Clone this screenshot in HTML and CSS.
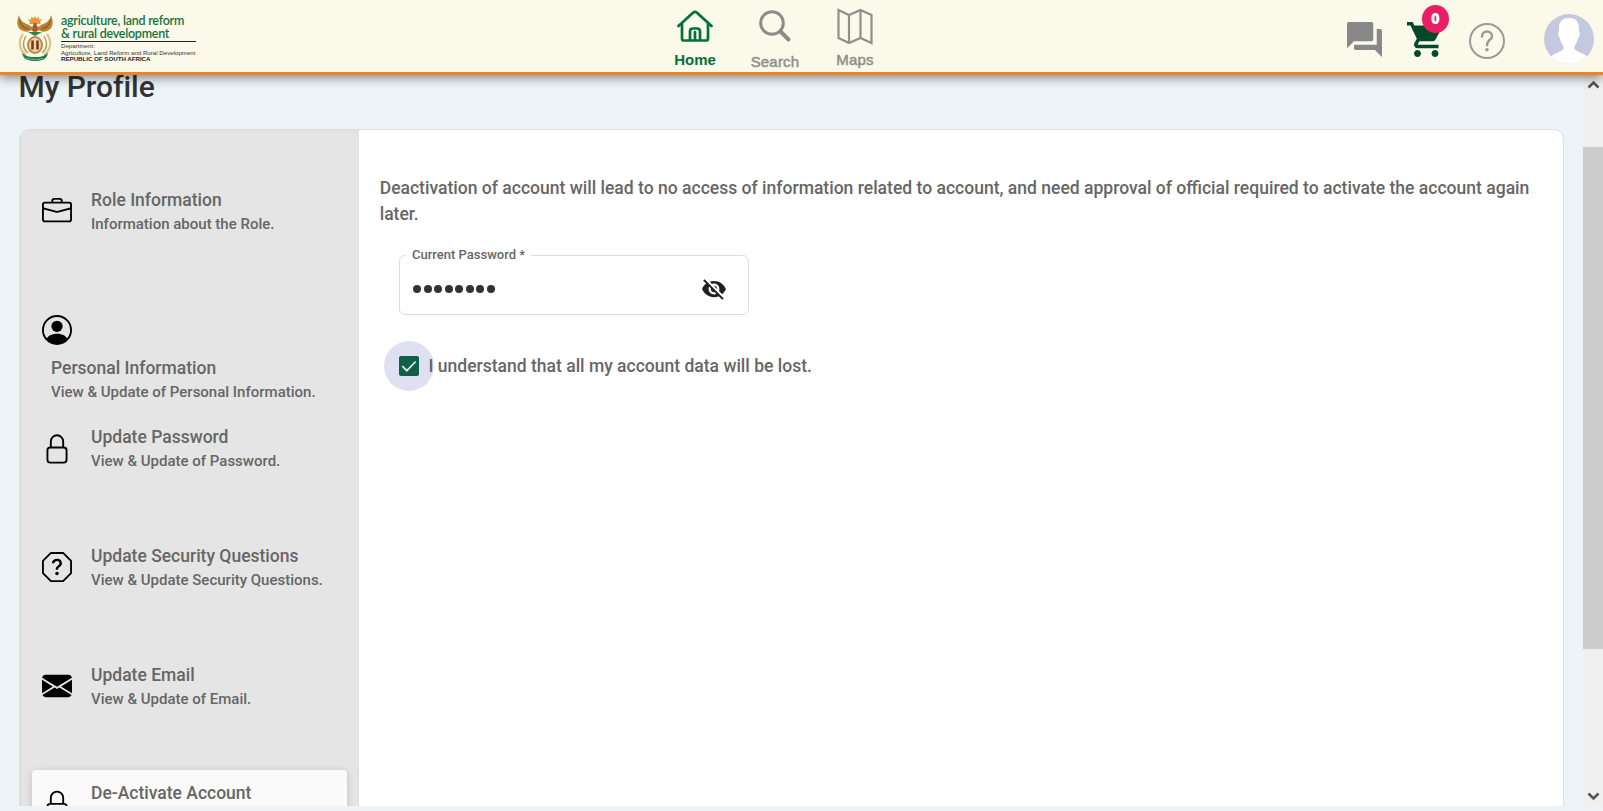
FILE: index.html
```html
<!DOCTYPE html>
<html lang="en">
<head>
<meta charset="utf-8">
<title>My Profile</title>
<link rel="stylesheet" href="styles.css">
</head>
<body>
<header class="topbar">
  <div class="brand">
    <svg class="emblem" viewBox="0 0 36 48">
      <path d="M18 1l1.200 2.600 2.500-2 .2 3 3.200-.4-2 2.800.5 2H12.400l.5-2-2-2.800 3.200.4.2-3 2.500 2z" fill="#f0953a"/>
      <path d="M2 0C-1 7 0 14 6 16c3 1 6 1 8-1l4 3 4-3c2 2 5 2 8 1 6-2 7-9 4-16-1 5-4 8-9 9.500l-4 2.500-3-4-3 4-4-2.500C6 8 3 5 2 0z" fill="#b9822e"/>
      <path d="M2.500 5c1 5 4 8 9 9M33.500 5c-1 5-4 8-9 9" fill="none" stroke="#8f6122" stroke-width="1.300"/>
      <path d="M16.500 8h3l1 8h-5z" fill="#a8572c"/>
      <path d="M11 17h14l-7 4z" fill="#2d8050"/>
      <path d="M6 19c-5 7-4 16 3 21M30 19c5 7 4 16-3 21" fill="none" stroke="#ddc48a" stroke-width="2.200"/>
      <path d="M9 21c-4 7-3 13 2 17M27 21c4 7 3 13-2 17" fill="none" stroke="#b59a60" stroke-width="1.300"/>
      <ellipse cx="18" cy="30" rx="8" ry="9" fill="#b98a45"/>
      <ellipse cx="18" cy="30" rx="6" ry="7" fill="#f0d6a6"/>
      <path d="M15.500 25.500v9M20.500 25.500v9" stroke="#7a2e20" stroke-width="2.500"/>
      <path d="M5 38c5 4 8 4 13 4s8 0 13-4c-1 6-6 8-13 8S6 44 5 38z" fill="#1f7a48"/>
      <path d="M10 43c5 2 11 2 16 0" fill="none" stroke="#c8dcb8" stroke-width=".8" stroke-dasharray="1.500 .8"/>
    </svg>
    <div class="brand-text">
      <div class="brand-name">agriculture, land reform</div>
      <div class="brand-name second">&amp; rural development</div>
      <div class="brand-dept">
        <div>Department:</div>
        <div>Agriculture, Land Reform and Rural Development</div>
        <div class="republic">REPUBLIC OF SOUTH AFRICA</div>
      </div>
    </div>
  </div>
  <nav class="nav">
    <a class="nav-item active">
      <svg width="40" height="36" viewBox="0 0 40 36" fill="none" stroke="#04703a" stroke-width="2.700" stroke-linecap="round" stroke-linejoin="round"><path d="M3.500 18L18 4.700q2-1.700 4 0L36.500 18M7 15.500v15q0 2 2 2h22q2 0 2-2v-15M15 32v-8.500q0-3 3-3h4q3 0 3 3V32M20 24v8"/></svg>
      <span>Home</span>
    </a>
    <a class="nav-item search">
      <svg width="40" height="38" viewBox="0 0 40 38" fill="none" stroke="#8c8c88" stroke-linecap="round"><circle cx="17" cy="15" r="11.300" stroke-width="3"/><path d="M25.500 23.500L33.500 31.500" stroke-width="4"/></svg>
      <span>Search</span>
    </a>
    <a class="nav-item maps">
      <svg width="40" height="38" viewBox="0 0 40 38" fill="none" stroke="#8f8f8b" stroke-width="2.200"><path d="M3.500 2L14 7l11.500-5L36.500 7v28L25.500 30 14 35 3.500 30zM14 7v28M25.500 2v28"/></svg>
      <span>Maps</span>
    </a>
  </nav>
  <div class="actions">
    <svg class="chat" viewBox="2 2 20 20" fill="#888"><path d="M21 6h-2v9H6v2c0 .55.45 1 1 1h11l4 4V7c0-.55-.45-1-1-1zm-4 6V3c0-.55-.45-1-1-1H3c-.55 0-1 .45-1 1v14l4-4h10c.55 0 1-.45 1-1z"/></svg>
    <div class="cart">
      <svg viewBox="1 2 20 20" fill="#06492a"><path d="M7 18c-1.100 0-1.990.9-1.990 2S5.900 22 7 22s2-.9 2-2-.9-2-2-2zM1 2v2h2l3.600 7.590-1.350 2.450c-.16.28-.25.61-.25.960 0 1.100.9 2 2 2h12v-2H7.420c-.14 0-.25-.11-.25-.25l.03-.12.9-1.630h7.450c.75 0 1.410-.41 1.750-1.030l3.580-6.490c.08-.14.12-.31.12-.480 0-.55-.45-1-1-1H5.210l-.94-2H1zm16 16c-1.100 0-1.990.9-1.990 2s.89 2 1.990 2 2-.9 2-2-.9-2-2-2z"/></svg>
      <span class="badge">0</span>
    </div>
    <svg class="help" viewBox="0 0 36 36" fill="none" stroke="#9b9b99"><circle cx="18" cy="18" r="17" stroke-width="2"/><path d="M13 13.500c0-3 2-5 5-5s5 2 5 4.700c0 3.800-5 3.600-5 9" stroke-width="2.500" stroke-linecap="round"/><circle cx="18" cy="26.700" r="1.800" fill="#9b9b99" stroke="none"/></svg>
    <svg class="avatar" viewBox="0 0 50 50"><defs><clipPath id="round"><circle cx="25" cy="25" r="25"/></clipPath></defs><g clip-path="url(#round)"><path d="M0 0h50v50H0z" fill="#c5c9df"/><path d="M25 4c-7 0-10 4-10 10v4c-1.500 0-1 5 1 6 .5 4 2 6 3.500 8v3c-2 3-10 4-13 8L4 52h42l-2.500-9c-3-4-11-5-13-8v-3c1.500-2 3-4 3.500-8 2-1 2.500-6 1-6v-4c0-6-3-10-10-10z" fill="#fff"/></g></svg>
  </div>
</header>
<div class="viewport">
  <main class="page">
    <h1>My Profile</h1>
    <section class="card">
      <aside class="sidebar">
        <a class="item">
          <svg viewBox="0 0 16 16"><path d="M6.500 1A1.500 1.500 0 0 0 5 2.500V3H1.500A1.500 1.500 0 0 0 0 4.500v8A1.500 1.500 0 0 0 1.500 14h13a1.500 1.500 0 0 0 1.500-1.500v-8A1.500 1.500 0 0 0 14.500 3H11v-.5A1.500 1.500 0 0 0 9.500 1h-3zm0 1h3a.5.5 0 0 1 .5.5V3H6v-.5a.5.5 0 0 1 .5-.5zm1.886 6.914L15 7.151V12.500a.5.5 0 0 1-.5.5h-13a.5.5 0 0 1-.5-.5V7.150l6.614 1.764a1.500 1.500 0 0 0 .772 0zM1.500 4h13a.5.5 0 0 1 .5.5v1.616L8.129 7.948a.5.5 0 0 1-.258 0L1 6.116V4.500a.5.5 0 0 1 .5-.5z"/></svg>
          <div><b>Role Information</b><small>Information about the Role.</small></div>
        </a>
        <a class="item wrapped">
          <svg viewBox="0 0 16 16"><circle cx="8" cy="8" r="7.500" fill="none" stroke="#000"/><circle cx="8" cy="6" r="3"/><path d="M2.400 12.800C3.200 11.300 5 10 8 10s4.800 1.300 5.600 2.800A7.400 7.400 0 0 1 8 15.400a7.400 7.400 0 0 1-5.600-2.600z"/></svg>
          <div><b>Personal Information</b><small>View &amp; Update of Personal Information.</small></div>
        </a>
        <a class="item">
          <svg viewBox="0 0 16 16" fill="none" stroke="#000"><rect x="2.900" y="7.700" width="10.200" height="8.100" rx="1.500"/><path d="M4.700 7.700V4.500a3.300 3.300 0 0 1 6.600 0v3.200"/></svg>
          <div><b>Update Password</b><small>View &amp; Update of Password.</small></div>
        </a>
        <a class="item">
          <svg viewBox="0 0 16 16"><path d="M4.750.5h6.500L15.500 4.750v6.500L11.250 15.500h-6.500L.5 11.250v-6.500z" fill="none" stroke="#000"/><path d="M5.250 6.033h1.320c.06-.75.550-1.280 1.400-1.280.750 0 1.340.380 1.340 1.170 0 .630-.350.940-.910 1.370-.640.470-1.100.980-1.090 1.850v.35h1.270v-.2c0-.65.250-.85.920-1.350.560-.42 1.140-.93 1.140-2.100 0-1.500-1.200-2.300-2.600-2.300-1.500 0-2.720.8-2.790 2.490z"/><circle cx="8" cy="11.500" r=".95"/></svg>
          <div><b>Update Security Questions</b><small>View &amp; Update Security Questions.</small></div>
        </a>
        <a class="item">
          <svg viewBox="0 0 16 16"><path d="M.05 3.555A2 2 0 0 1 2 2h12a2 2 0 0 1 1.950 1.555L8 8.414.05 3.555zM0 4.697v7.104l5.803-3.558L0 4.697zM6.761 8.830l-6.570 4.027A2 2 0 0 0 2 14h12a2 2 0 0 0 1.808-1.144l-6.570-4.027L8 9.586l-1.239-.757zm3.436-.586L16 11.801V4.697l-5.803 3.546z"/></svg>
          <div><b>Update Email</b><small>View &amp; Update of Email.</small></div>
        </a>
        <a class="item selected">
          <svg viewBox="0 0 16 16" fill="none" stroke="#000"><rect x="2.900" y="7.900" width="10.200" height="8.100" rx="1.500"/><path d="M4.700 7.900V4.700a3.300 3.300 0 0 1 6.600 0v3.200"/></svg>
          <div><b>De-Activate Account</b></div>
        </a>
      </aside>
      <div class="content">
        <p class="notice">Deactivation of account will lead to no access of information related to account, and need approval of official required to activate the account again later.</p>
        <fieldset class="field">
          <legend>Current Password *</legend>
          <span class="dots"><i></i><i></i><i></i><i></i><i></i><i></i><i></i><i></i></span>
          <svg width="26" height="26" viewBox="0 0 24 24" fill="#1f1f1f"><path d="M12 7c2.760 0 5 2.240 5 5 0 .65-.13 1.260-.36 1.830l2.920 2.920c1.510-1.260 2.700-2.890 3.430-4.750-1.730-4.390-6-7.500-11-7.500-1.400 0-2.740.25-3.980.7l2.160 2.160C10.740 7.130 11.350 7 12 7zM2 4.270l2.280 2.280.46.46C3.080 8.300 1.780 10.020 1 12c1.730 4.390 6 7.500 11 7.500 1.550 0 3.030-.3 4.380-.84l.42.42L19.730 22 21 20.730 3.270 3 2 4.270zM7.530 9.800l1.550 1.550c-.05.21-.08.43-.08.65 0 1.660 1.340 3 3 3 .22 0 .44-.03.65-.08l1.550 1.550c-.67.33-1.410.53-2.200.53-2.760 0-5-2.240-5-5 0-.79.2-1.530.53-2.200zm4.310-.78l3.150 3.150.02-.16c0-1.660-1.340-3-3-3l-.17.01z"/></svg>
        </fieldset>
        <label class="confirm">
          <span class="check"><svg width="20" height="20" viewBox="0 0 20 20" fill="none" stroke="#e3e8f5" stroke-width="1.700"><path d="M3.300 10.200l4.500 4.500L16.700 5.500"/></svg></span>
          <span class="confirm-text">I understand that all my account data will be lost.</span>
        </label>
      </div>
    </section>
  </main>
  <div class="scrollbar">
    <svg width="20" height="20" viewBox="0 0 20 20" fill="none" stroke="#555" stroke-width="2.600"><path d="M5.500 12.500L10.500 7.500l5 5"/></svg>
    <div class="thumb"></div>
    <svg width="20" height="20" viewBox="0 0 20 20" fill="none" stroke="#555" stroke-width="2.600"><path d="M5.500 7.500l5 5 5-5"/></svg>
  </div>
</div>
</body>
</html>
```
FILE: styles.css
```css
* { box-sizing: border-box; }
body {
  margin: 0;
  height: 811px;
  overflow: hidden;
  background: #ecf4f8;
  font-family: Roboto, "Liberation Sans", sans-serif;
  color: #666;
}
.topbar {
  position: relative;
  z-index: 2;
  height: 75px;
  display: grid;
  grid-template-columns: 660px 1fr auto;
  background: #fbf9ea;
  border-bottom: 3px solid #f58220;
  box-shadow: 0 3px 10px rgba(0, 0, 0, .45);
}
.brand { display: flex; padding: 15px 0 0 17px; }
.emblem { width: 36px; height: 48px; margin-right: 8px; }
.brand-text { width: 135px; white-space: nowrap; }
.brand-name { font: 600 12.5px/12px Lato, sans-serif; color: #137240; letter-spacing: -.25px; }
.brand-name.second { padding-top: 1px; padding-bottom: 1px; height: 14px; }
.brand-dept {
  border-top: 1px solid #222;
  padding-top: 1px;
  font: 6.15px/6.5px "Liberation Sans", sans-serif;
  color: #333;
}
.republic { font-weight: 700; color: #222; }
.nav { display: flex; padding-top: 8px; gap: 10px; }
.nav-item {
  width: 70px;
  display: flex;
  flex-direction: column;
  align-items: center;
  font: 700 15px/16px "Liberation Sans", sans-serif;
  letter-spacing: -.1px;
  color: #8f8f8b;
}
.nav-item.active { color: #04703a; }
.nav-item span { margin-top: auto; margin-bottom: 4px; }
.nav-item.search, .nav-item.maps {
  font-weight: 400;
  -webkit-text-stroke: .5px #8f8f8b;
  letter-spacing: .2px;
}
.nav-item.search span { margin-bottom: 2px; }
.actions { display: flex; align-items: flex-start; padding-right: 9px; }
.chat { width: 35px; height: 35px; margin: 22px 25px 0 0; }
.cart { position: relative; margin: 22px 30px 0 0; width: 32px; height: 35px; }
.cart svg { width: 35px; height: 35px; }
.badge {
  position: absolute;
  left: 15px;
  top: -17px;
  width: 27px;
  height: 28px;
  border-radius: 50%;
  background: #e91e63;
  color: #fff;
  font: 800 15px/27px "Open Sans", sans-serif;
  text-align: center;
}
.help { width: 36px; height: 36px; margin: 23px 39px 0 0; }
.avatar { width: 50px; height: 50px; margin-top: 14px; }

.viewport { height: 731px; display: flex; overflow: hidden; }
.page { flex: 1; padding: 0 19px; }
h1 {
  margin: 0 0 0 -.5px;
  height: 54px;
  font-size: 30px;
  line-height: 24px;
  font-weight: 500;
  color: #333;
  letter-spacing: -.05px;
}
.card {
  height: 800px;
  display: flex;
  background: #fff;
  border: 1px solid #dcdfe2;
  border-radius: 10px;
  overflow: hidden;
}
.sidebar {
  width: 339px;
  flex: none;
  padding: 45px 11px 0 10px;
  background: #e5e5e5;
  border: 2px solid #e0e0e2;
  border-right-width: 1px;
  display: flex;
  flex-direction: column;
  gap: 50.700px;
}
.item {
  display: flex;
  align-items: center;
  height: 68px;
  flex: none;
  padding: 0 10px;
  border-radius: 4px;
}
.item svg { width: 30px; height: 30px; flex: none; overflow: visible; }
.item div { margin: 2px 0 0 19px; height: 48px; white-space: nowrap; }
.item b, .item small { display: block; font-weight: 500; line-height: 24px; }
.item b { font-size: 17.5px; }
.item small { font-size: 15px; }
.item.wrapped { flex-wrap: wrap; align-content: flex-start; padding-top: 19px; }
.item.wrapped div { margin: 11px 0 0 9px; }
.item.selected { background: #fafafa; box-shadow: 0 2px 8px rgba(0, 0, 0, .16); }
.content { flex: 1; padding: 45px 20px 0; }
.notice { margin: 0 0 0 .7px; font-size: 17.54px; line-height: 26px; font-weight: 500; }
.field {
  width: 350px;
  height: 69px;
  margin: 19px 0 0 20px;
  padding: 0 21px 0 13px;
  border: 1px solid #dedede;
  border-radius: 6px;
  display: flex;
  align-items: center;
  justify-content: space-between;
}
legend { margin-left: -7px; padding: 0 6px; font-size: 13px; line-height: 18px; height: 18px; font-weight: 500; }
.dots { display: flex; gap: 2.500px; }
.dots i { width: 8px; height: 8px; border-radius: 50%; background: #333; }
.confirm { display: flex; align-items: center; margin: 26px 0 0 5px; font-size: 17.53px; font-weight: 500; }
.confirm-text { padding-bottom: 1px; }
.check {
  width: 50px;
  height: 50px;
  margin-right: -5.500px;
  border-radius: 50%;
  background: #dfe1f2;
  display: grid;
  place-items: center;
}
.check svg { background: #0e6046; border-radius: 2px; }
.scrollbar {
  width: 20px;
  background: #f0f0f0;
  display: flex;
  flex-direction: column;
  justify-content: space-between;
}
.thumb { height: 502px; margin-bottom: 137px; margin-top: 52px; background: #cdcdcd; }
```
